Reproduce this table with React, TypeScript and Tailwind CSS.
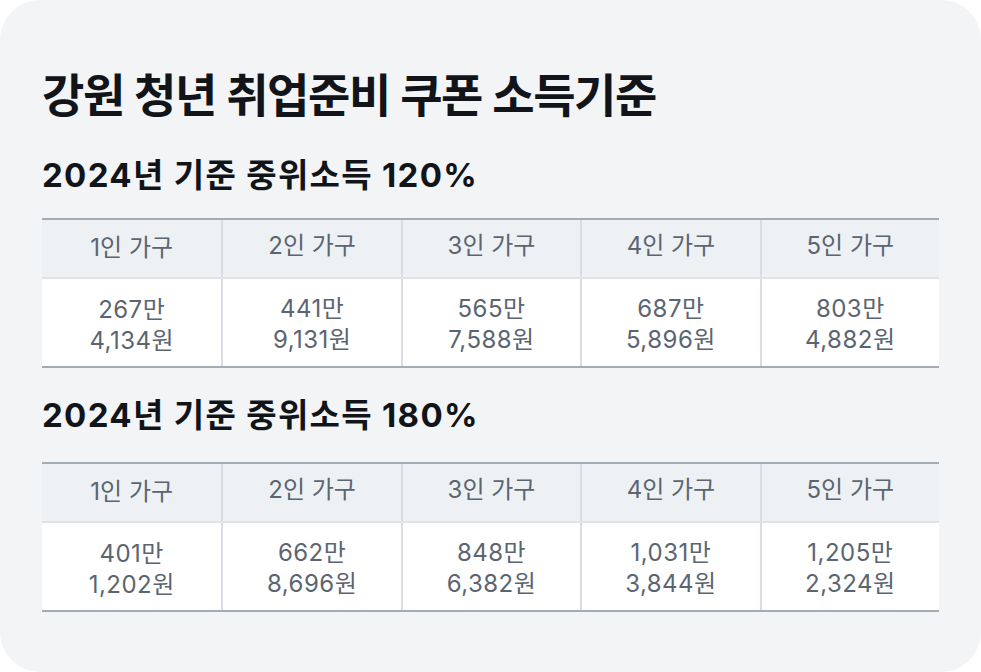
const font = { fontFamily: '"Inter", "Noto Sans CJK KR", sans-serif' };

type Row = { amount: string; won: string };

const heads = ['1인 가구', '2인 가구', '3인 가구', '4인 가구', '5인 가구'];

const table120: Row[] = [
  { amount: '267만', won: '4,134원' },
  { amount: '441만', won: '9,131원' },
  { amount: '565만', won: '7,588원' },
  { amount: '687만', won: '5,896원' },
  { amount: '803만', won: '4,882원' },
];

const table180: Row[] = [
  { amount: '401만', won: '1,202원' },
  { amount: '662만', won: '8,696원' },
  { amount: '848만', won: '6,382원' },
  { amount: '1,031만', won: '3,844원' },
  { amount: '1,205만', won: '2,324원' },
];

function IncomeTable({ rows }: { rows: Row[] }) {
  return (
    <div className="border-y-2 border-[#a3abb5]">
      <div className="grid grid-cols-5 bg-[#eef1f4] border-b-2 border-[#dfe3e8]">
        {heads.map((h, i) => (
          <div
            key={h}
            className={`h-[57px] flex items-center justify-center text-[24px] text-[#5b6571] ${
              i > 0 ? 'border-l-2 border-[#d9dde3] pb-[5px]' : 'pb-[1px]'
            }`}
          >
            {h}
          </div>
        ))}
      </div>
      <div className="grid grid-cols-5 bg-white">
        {rows.map((r, i) => (
          <div
            key={i}
            className={`h-[87px] flex flex-col items-center justify-center text-[24px] leading-[31px] tracking-[0.02em] text-[#5b6571] ${
              i > 0 ? 'border-l-2 border-[#d9dde3] pt-[2px]' : 'pt-[4px]'
            }`}
          >
            <span>{r.amount}</span>
            <span>{r.won}</span>
          </div>
        ))}
      </div>
    </div>
  );
}

export default function App() {
  return (
    <div className="w-[981px] h-[672px] bg-white" style={font}>
      <div className="h-full rounded-[40px] bg-[#f3f4f6] px-[42px] pt-[67px]">
        <h1 className="text-[46px] leading-[56px] font-semibold text-[#111418] tracking-[-0.03em]">
          강원 청년 취업준비 쿠폰 소득기준
        </h1>
        <h2 className="mt-[32px] text-[33px] leading-[40px] font-bold text-[#111418] tracking-[0.04em]">
          2024년 기준 중위소득 120%
        </h2>
        <div className="mt-[23px]">
          <IncomeTable rows={table120} />
        </div>
        <h2 className="mt-[27px] text-[33px] leading-[40px] font-bold text-[#111418] tracking-[0.04em]">
          2024년 기준 중위소득 180%
        </h2>
        <div className="mt-[27px]">
          <IncomeTable rows={table180} />
        </div>
      </div>
    </div>
  );
}
